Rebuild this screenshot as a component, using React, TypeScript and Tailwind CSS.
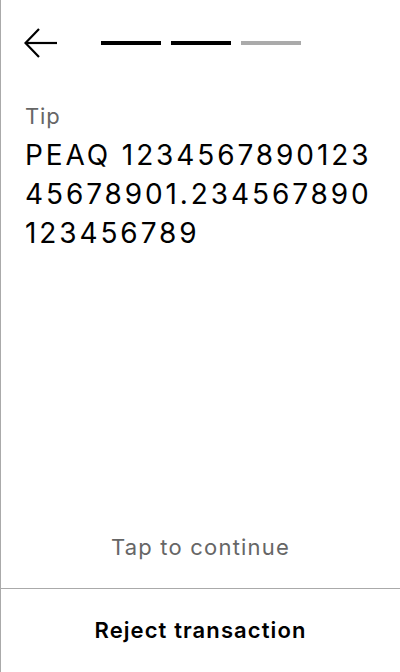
import React from "react";

export default function App() {
  return (
    <div className="w-[400px] h-[672px] bg-white border-l border-[#aaaaaa] flex flex-col" style={{ fontFamily: "Inter, 'Noto Sans', sans-serif" }}>
      <div className="flex items-center h-[86px] pl-[23px]">
        <svg width="34" height="30" viewBox="0 0 34 30" fill="none" stroke="#000" strokeWidth="2.2">
          <path d="M2 15 H33" />
          <path d="M15 1 L1.5 15 L15 29" />
        </svg>
        <div className="flex gap-[10px] ml-[43px] -mt-[1px]">
          <div className="w-[60px] h-[4px] bg-black" />
          <div className="w-[60px] h-[4px] bg-black" />
          <div className="w-[60px] h-[4px] bg-[#aaaaaa]" />
        </div>
      </div>
      <div className="px-[24px] pt-[16px]">
        <div className="text-[22px] leading-[28px] tracking-[0.8px] text-[#666666]">Tip</div>
        <div className="mt-[6px] text-[28px] leading-[39px] tracking-[2.9px] text-black whitespace-nowrap">
          PEAQ 1234567890123<br />45678901.234567890<br />123456789
        </div>
      </div>
      <div className="flex-1" />
      <div className="text-center text-[22px] tracking-[1.2px] text-[#666666] pb-[24px]">Tap to continue</div>
      <div className="border-t border-[#aaaaaa] h-[84px] flex items-center justify-center">
        <span className="text-[22px] font-semibold tracking-[1.1px] text-black">Reject transaction</span>
      </div>
    </div>
  );
}
